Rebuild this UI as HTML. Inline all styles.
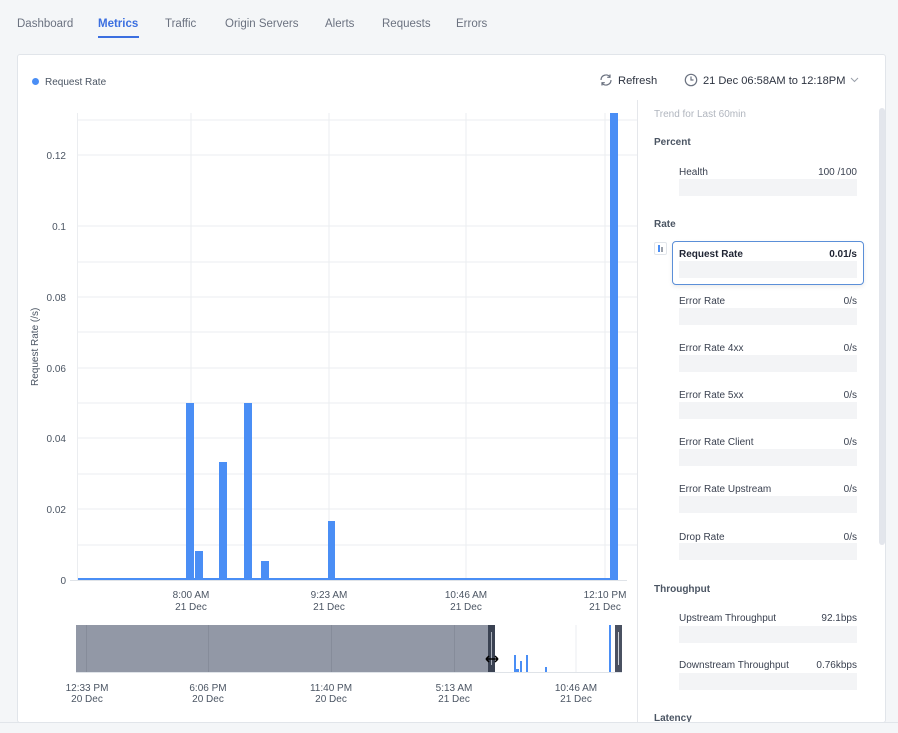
<!DOCTYPE html>
<html><head><style>
*{margin:0;padding:0;box-sizing:border-box}
body{width:898px;height:733px;background:#f4f6f8;font-family:"Liberation Sans",sans-serif;position:relative;overflow:hidden;color:#3a4150}
.a{position:absolute;white-space:nowrap}
.tab{position:absolute;top:18px;font-size:11.5px;color:#6b7280}
.card{position:absolute;left:17px;top:54px;width:869px;height:669px;background:#fff;border:1px solid #e1e5ea;border-radius:3px}
.lbl{font-size:10px;color:#3a4150}
.bar{position:absolute;left:679px;width:178px;height:17px;background:#f3f4f6}
.sec{font-size:10px;font-weight:bold;color:#4b5563}
</style></head><body>
<div class="tab" style="left:17px">Dashboard</div>
<div class="tab" style="left:98px;color:#3b6fe0;font-weight:bold">Metrics</div>
<div class="a" style="left:98px;top:36px;width:41px;height:2px;background:#3b6fe0"></div>
<div class="tab" style="left:165px">Traffic</div>
<div class="tab" style="left:225px">Origin Servers</div>
<div class="tab" style="left:325px">Alerts</div>
<div class="tab" style="left:382px">Requests</div>
<div class="tab" style="left:456px">Errors</div>
<div class="card"></div>
<div class="a" style="left:32px;top:78px;width:7px;height:7px;border-radius:50%;background:#4a8ef5"></div>
<div class="a" style="left:45px;top:77px;font-size:10px;color:#4b5563">Request Rate</div>
<svg class="a" style="left:599px;top:73px" width="14" height="14" viewBox="0 0 14 14" fill="none" stroke="#6b7280" stroke-width="1.2"><path d="M2 7a5 5 0 0 1 9-3M12 7a5 5 0 0 1-9 3M11 1.5v2.8H8.2M3 12.5V9.7h2.8"/></svg>
<div class="a" style="left:618px;top:75px;font-size:11.2px;color:#2d3340">Refresh</div>
<svg class="a" style="left:684px;top:73px" width="14" height="14" viewBox="0 0 14 14" fill="none" stroke="#6b7280" stroke-width="1.2"><circle cx="7" cy="7" r="5.7"/><path d="M7 3.5V7h2.5"/></svg>
<div class="a" style="left:703px;top:75px;font-size:11.1px;color:#2d3340">21 Dec 06:58AM to 12:18PM</div>
<svg class="a" style="left:850px;top:77px" width="9" height="6" viewBox="0 0 9 6" fill="none" stroke="#9aa0aa"><path d="M1 1l3.5 3.5L8 1"/></svg>

<svg class="a" style="left:0;top:0" width="898" height="733">
<g stroke="#ebedf0" stroke-width="1">
<line x1="77" y1="120" x2="637" y2="120"/><line x1="77" y1="155" x2="637" y2="155"/><line x1="77" y1="226" x2="637" y2="226"/><line x1="77" y1="262" x2="637" y2="262"/><line x1="77" y1="297" x2="637" y2="297"/><line x1="77" y1="332" x2="637" y2="332"/><line x1="77" y1="368" x2="637" y2="368"/><line x1="77" y1="403" x2="637" y2="403"/><line x1="77" y1="438" x2="637" y2="438"/><line x1="77" y1="474" x2="637" y2="474"/><line x1="77" y1="509" x2="637" y2="509"/><line x1="77" y1="545" x2="637" y2="545"/>
<line x1="77.5" y1="113" x2="77.5" y2="580"/><line x1="191" y1="113" x2="191" y2="580"/><line x1="329" y1="113" x2="329" y2="580"/><line x1="466" y1="113" x2="466" y2="580"/><line x1="605" y1="113" x2="605" y2="580"/>
</g>
<line x1="70" y1="580.5" x2="627" y2="580.5" stroke="#dfe3e8"/>
<g fill="#4a8ef5">
<rect x="78" y="578" width="532" height="2"/>
<rect x="186" y="403" width="8" height="177"/><rect x="195" y="551" width="8" height="29"/><rect x="219" y="462" width="8" height="118"/><rect x="244" y="403" width="8" height="177"/><rect x="261" y="561" width="8" height="19"/><rect x="328" y="521" width="7" height="59"/><rect x="610" y="113" width="8" height="467"/>
</g>
<g font-size="10" fill="#4b5563" text-anchor="end">
<text x="66" y="159">0.12</text><text x="66" y="230">0.1</text><text x="66" y="301">0.08</text><text x="66" y="372">0.06</text><text x="66" y="442">0.04</text><text x="66" y="513">0.02</text><text x="66" y="584">0</text>
</g>
<text transform="translate(38,386) rotate(-90)" font-size="10" fill="#4b5563">Request Rate (/s)</text>
<g font-size="10" fill="#4b5563" text-anchor="middle">
<text x="191" y="598">8:00 AM</text><text x="191" y="610">21 Dec</text>
<text x="329" y="598">9:23 AM</text><text x="329" y="610">21 Dec</text>
<text x="466" y="598">10:46 AM</text><text x="466" y="610">21 Dec</text>
<text x="605" y="598">12:10 PM</text><text x="605" y="610">21 Dec</text>
<text x="87" y="691">12:33 PM</text><text x="87" y="702">20 Dec</text>
<text x="208" y="691">6:06 PM</text><text x="208" y="702">20 Dec</text>
<text x="331" y="691">11:40 PM</text><text x="331" y="702">20 Dec</text>
<text x="454" y="691">5:13 AM</text><text x="454" y="702">21 Dec</text>
<text x="576" y="691">10:46 AM</text><text x="576" y="702">21 Dec</text>
</g>
<line x1="76" y1="672.5" x2="622" y2="672.5" stroke="#dfe3e8"/>
<line x1="576" y1="625" x2="576" y2="672" stroke="#ebedf0"/>
<g fill="#4a8ef5"><rect x="514" y="655" width="2" height="17"/><rect x="520" y="661" width="2" height="11"/><rect x="526" y="655" width="2" height="17"/><rect x="545" y="667" width="2" height="5"/><rect x="609" y="625" width="2" height="47"/><rect x="516" y="669" width="3" height="3"/></g>
<rect x="76" y="625" width="412" height="47" fill="#9298a6"/>
<g stroke="#868c9a"><line x1="86.5" y1="625" x2="86.5" y2="672"/><line x1="208.5" y1="625" x2="208.5" y2="672"/><line x1="331.5" y1="625" x2="331.5" y2="672"/><line x1="454.5" y1="625" x2="454.5" y2="672"/></g>
<rect x="488" y="625" width="7" height="47" fill="#3a4252"/>
<rect x="615" y="625" width="7" height="47" fill="#4a5161"/>
<line x1="491.5" y1="632" x2="491.5" y2="665" stroke="#aab0bb"/><line x1="618.5" y1="632" x2="618.5" y2="665" stroke="#cfd3da"/>
<path d="M486 659h12M486 659l3-3M486 659l3 3M498 659l-3-3M498 659l-3 3" stroke="#000" stroke-width="1.5" fill="none"/>
<line x1="637.5" y1="100" x2="637.5" y2="722" stroke="#e5e7eb"/>
<rect x="879" y="108" width="6" height="437" rx="3" fill="#e3e6ec"/>
</svg>

<div class="a" style="left:654px;top:109px;font-size:10px;color:#b0b5be">Trend for Last 60min</div>
<div class="a sec" style="left:654px;top:137px">Percent</div>
<div class="a lbl" style="left:679px;top:167px">Health</div><div class="a lbl" style="right:41px;top:167px">100 /100</div><div class="bar" style="top:179px"></div>
<div class="a sec" style="left:654px;top:219px">Rate</div>
<div class="a" style="left:654px;top:242px;width:13px;height:13px;border:1px solid #e1e5ea;border-radius:2px;background:#fff"><div class="a" style="left:3px;top:2px;width:2px;height:7px;background:#4a8ef5"></div><div class="a" style="left:6px;top:4px;width:2px;height:5px;background:#9aa0aa"></div></div>
<div class="a" style="left:672px;top:241px;width:192px;height:44px;border:1px solid #5b8fd8;border-radius:4px;background:#fff;box-shadow:0 2px 4px rgba(0,0,0,.08)"></div>
<div class="a lbl" style="left:679px;top:249px;font-weight:bold;color:#1f2433">Request Rate</div><div class="a lbl" style="right:41px;top:249px;font-weight:bold;color:#1f2433">0.01/s</div><div class="bar" style="top:261px"></div>
<div class="a lbl" style="left:679px;top:296px">Error Rate</div><div class="a lbl" style="right:41px;top:296px">0/s</div><div class="bar" style="top:308px"></div>
<div class="a lbl" style="left:679px;top:343px">Error Rate 4xx</div><div class="a lbl" style="right:41px;top:343px">0/s</div><div class="bar" style="top:355px"></div>
<div class="a lbl" style="left:679px;top:390px">Error Rate 5xx</div><div class="a lbl" style="right:41px;top:390px">0/s</div><div class="bar" style="top:402px"></div>
<div class="a lbl" style="left:679px;top:437px">Error Rate Client</div><div class="a lbl" style="right:41px;top:437px">0/s</div><div class="bar" style="top:449px"></div>
<div class="a lbl" style="left:679px;top:484px">Error Rate Upstream</div><div class="a lbl" style="right:41px;top:484px">0/s</div><div class="bar" style="top:496px"></div>
<div class="a lbl" style="left:679px;top:532px">Drop Rate</div><div class="a lbl" style="right:41px;top:532px">0/s</div><div class="bar" style="top:543px"></div>
<div class="a sec" style="left:654px;top:584px">Throughput</div>
<div class="a lbl" style="left:679px;top:613px">Upstream Throughput</div><div class="a lbl" style="right:41px;top:613px">92.1bps</div><div class="bar" style="top:626px"></div>
<div class="a lbl" style="left:679px;top:660px">Downstream Throughput</div><div class="a lbl" style="right:41px;top:660px">0.76kbps</div><div class="bar" style="top:673px"></div>
<div class="a sec" style="left:654px;top:713px">Latency</div>
<div class="a" style="left:0;top:722px;width:898px;height:11px;background:#f4f6f8;border-top:1px solid #e1e5ea"></div>
</body></html>
